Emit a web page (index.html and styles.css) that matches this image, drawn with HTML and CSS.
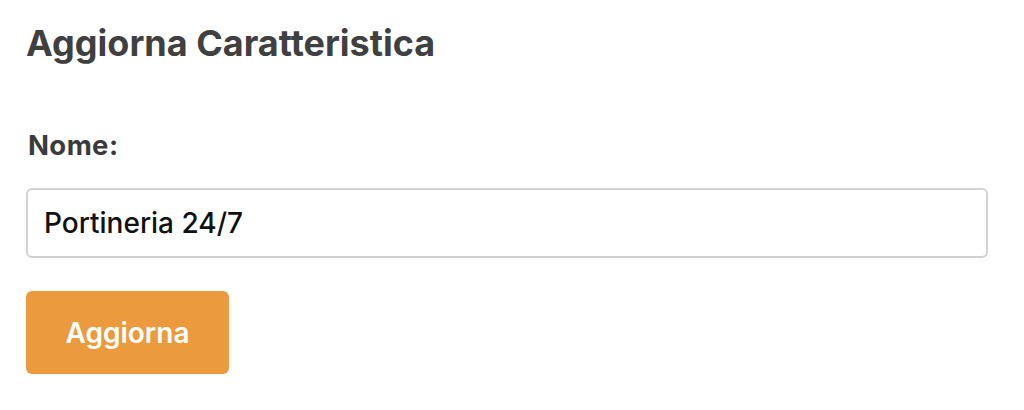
FILE: index.html
```html
<!DOCTYPE html>
<html lang="it">
<head>
<meta charset="utf-8">
<title>Aggiorna Caratteristica</title>
<link rel="stylesheet" href="styles.css">
</head>
<body>
<main class="page">
  <h1 class="title">Aggiorna Caratteristica</h1>
  <form class="form">
    <label class="label" for="nome">Nome:</label>
    <input class="input" id="nome" type="text" value="Portineria 24/7">
    <button class="btn" type="button">Aggiorna</button>
  </form>
</main>
</body>
</html>
```

FILE: styles.css
```css
html, body {
  margin: 0;
  padding: 0;
  background: #ffffff;
}
.page {
  font-family: "Inter", "Noto Sans", sans-serif;
  padding: 18px 36px 0 26px;
}
.title {
  margin: 0;
  font-size: 36px;
  line-height: 50px;
  font-weight: 700;
  color: #404040;
}
.form {
  display: flex;
  flex-direction: column;
  align-items: flex-start;
  margin-top: 60px;
}
.label {
  font-size: 27.5px;
  line-height: 34px;
  font-weight: 700;
  letter-spacing: 0.4px;
  color: #3b3b3b;
  margin-left: 2px;
}
.input {
  box-sizing: border-box;
  margin-top: 26px;
  width: 962px;
  height: 70px;
  border: 2px solid #d2d2d2;
  border-radius: 6px;
  padding: 0 16px;
  font-family: inherit;
  font-size: 28px;
  font-weight: 500;
  color: #111;
  outline: none;
}
.btn {
  margin-top: 33px;
  width: 203px;
  height: 83px;
  border: 0;
  border-radius: 6px;
  background: #eb9a3e;
  color: #fff;
  font-family: inherit;
  font-size: 28px;
  font-weight: 600;
}
```
